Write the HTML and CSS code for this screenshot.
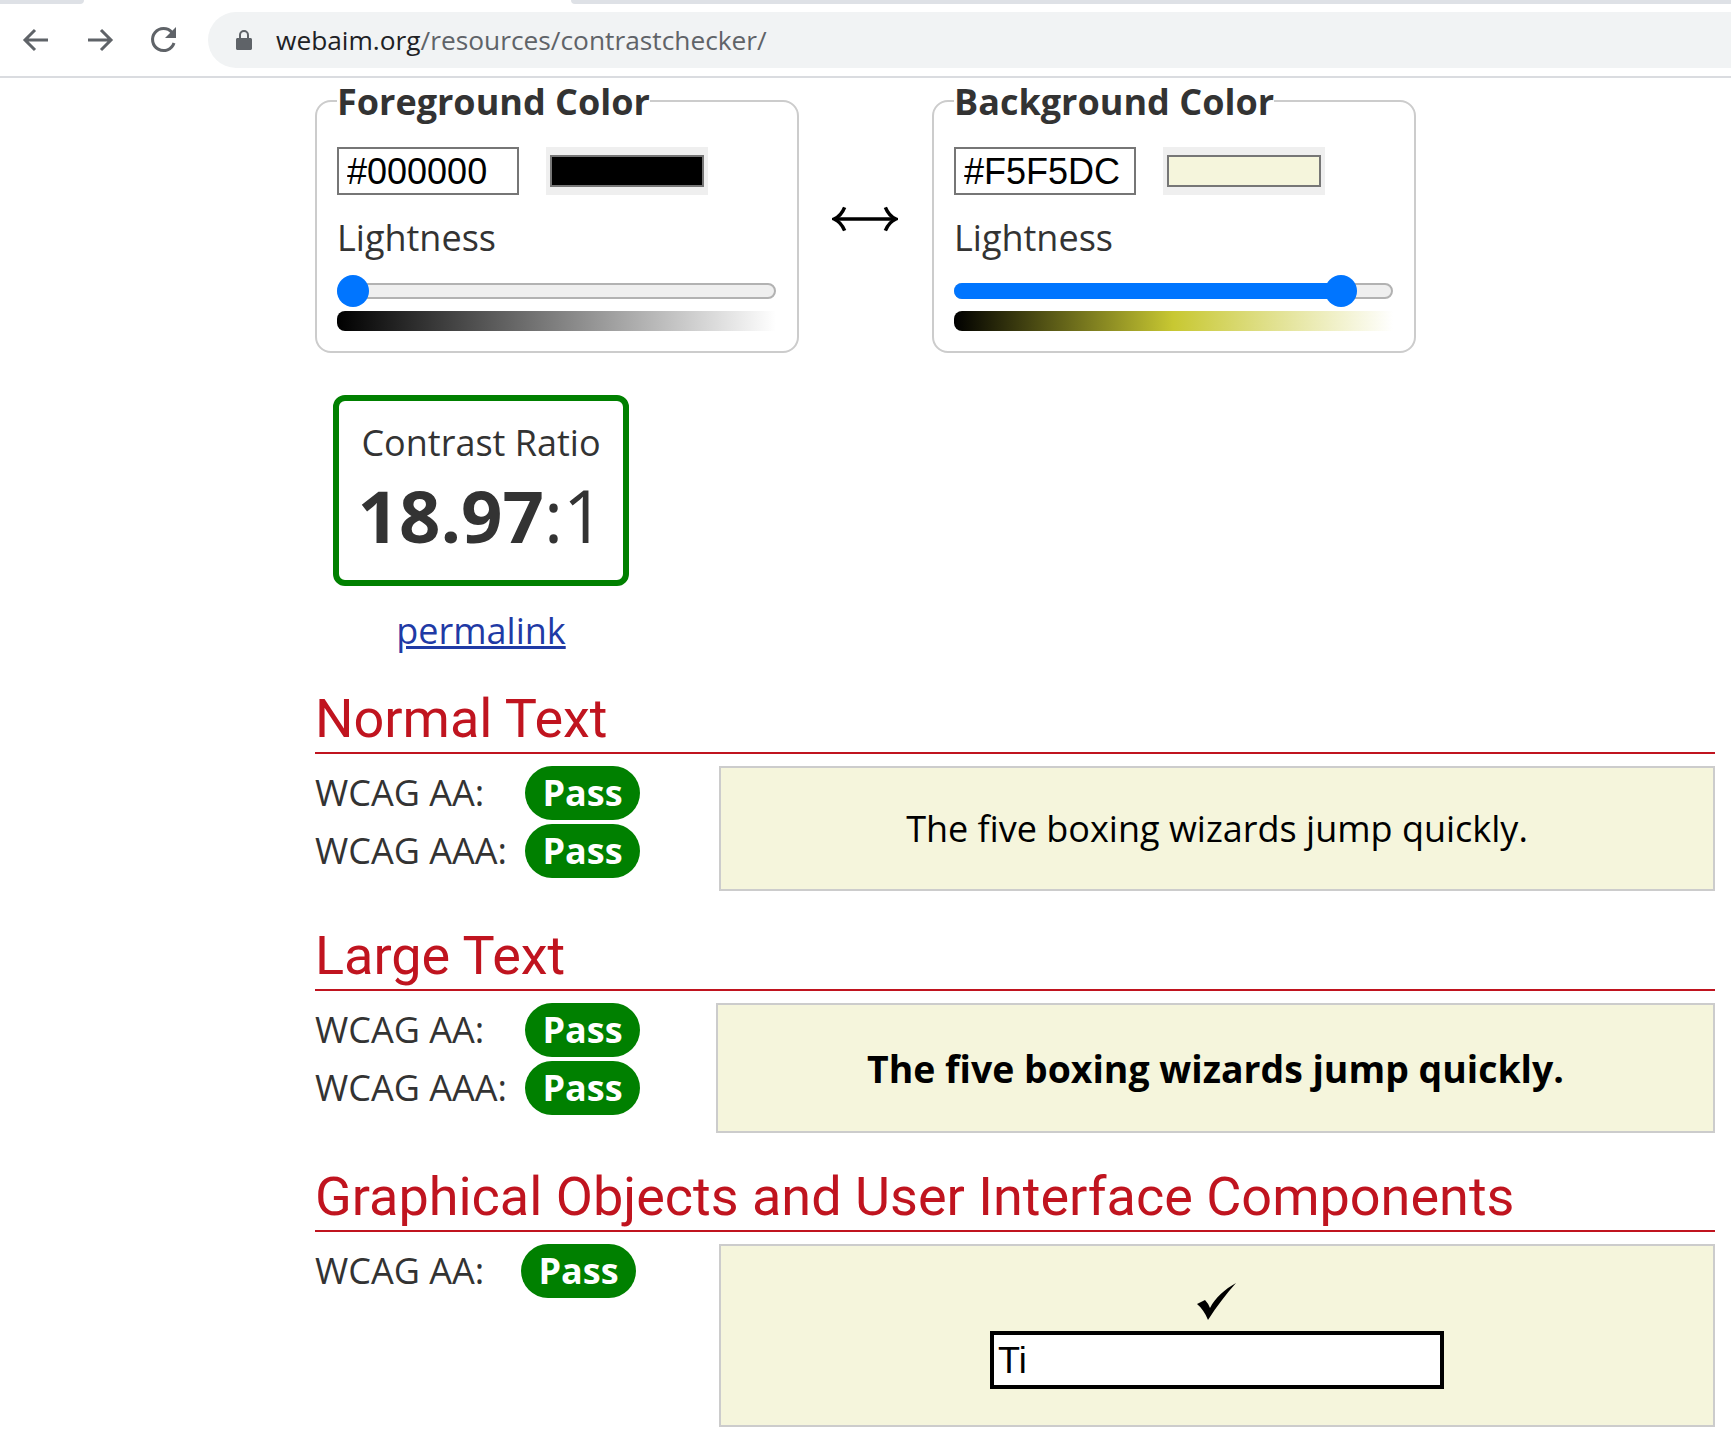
FILE: index.html
```html
<!DOCTYPE html>
<html lang="en">
<head>
<meta charset="utf-8">
<title>WebAIM: Contrast Checker</title>
<link rel="stylesheet" href="styles.css">
</head>
<body>
<header class="chrome">
  <div class="tabstrip"><span class="tab-left"></span><span class="tab-right"></span></div>
  <div class="toolbar">
    <svg class="nav" viewBox="0 0 32 32" aria-hidden="true"><path d="M28 16H6M15 6L5 16l10 10" /></svg>
    <svg class="nav" viewBox="0 0 32 32" aria-hidden="true"><path d="M4 16h22M17 6l10 10-10 10" /></svg>
    <svg class="nav" viewBox="0 0 32 32" aria-hidden="true"><path d="M26 19a11 11 0 1 1-2-10.500" /><path class="solid" d="M28 3v11H17z" /></svg>
    <div class="omnibox">
      <svg class="lock" viewBox="0 0 16 22" aria-hidden="true"><path d="M3 9V6a5 5 0 0 1 10 0v3h1.500c.8 0 1.500.7 1.500 1.500v9c0 .8-.7 1.500-1.500 1.500h-13C.7 21 0 20.300 0 19.500v-9C0 9.700.7 9 1.500 9zm2 0h6V6a3 3 0 0 0-6 0z"/></svg>
      <span class="url">webaim.org<span class="url-path">/resources/contrastchecker/</span></span>
    </div>
  </div>
</header>
<main class="page">
  <div class="pickers">
    <fieldset class="picker">
      <legend>Foreground Color</legend>
      <div class="color-row">
        <input class="hex" type="text" value="#000000" aria-label="Foreground hex">
        <span class="swatch"><span class="swatch-fill black"></span></span>
      </div>
      <div class="light-label">Lightness</div>
      <div class="slider"><span class="thumb thumb-fg"></span></div>
      <div class="ramp ramp-fg"></div>
    </fieldset>
    <div class="swap">
      <svg viewBox="0 0 68 26" aria-hidden="true"><path d="M3 13h62" /><path d="M13 1C11 6 7 11 2 13c5 2 9 7 11 12M55 1c2 5 6 10 11 12-5 2-9 7-11 12" /></svg>
    </div>
    <fieldset class="picker">
      <legend>Background Color</legend>
      <div class="color-row">
        <input class="hex" type="text" value="#F5F5DC" aria-label="Background hex">
        <span class="swatch"><span class="swatch-fill beige"></span></span>
      </div>
      <div class="light-label">Lightness</div>
      <div class="slider"><span class="slider-fill"></span><span class="thumb thumb-bg"></span></div>
      <div class="ramp ramp-bg"></div>
    </fieldset>
  </div>

  <div class="ratio">
    <div class="ratio-box">
      <div class="ratio-label">Contrast Ratio</div>
      <div class="ratio-value"><strong>18.97</strong>:1</div>
    </div>
    <a class="permalink" href="#">permalink</a>
  </div>

  <section class="result result-normal">
    <h2>Normal Text</h2>
    <div class="result-body">
      <div class="checks">
        <div class="check"><span class="check-name">WCAG AA:</span><span class="pass">Pass</span></div>
        <div class="check"><span class="check-name">WCAG AAA:</span><span class="pass">Pass</span></div>
      </div>
      <div class="sample sample-normal">The five boxing wizards jump quickly.</div>
    </div>
  </section>

  <section class="result result-large">
    <h2>Large Text</h2>
    <div class="result-body">
      <div class="checks">
        <div class="check"><span class="check-name">WCAG AA:</span><span class="pass">Pass</span></div>
        <div class="check"><span class="check-name">WCAG AAA:</span><span class="pass">Pass</span></div>
      </div>
      <div class="sample sample-large">The five boxing wizards jump quickly.</div>
    </div>
  </section>

  <section class="result result-ui">
    <h2>Graphical Objects and User Interface Components</h2>
    <div class="result-body">
      <div class="checks">
        <div class="check"><span class="check-name check-name-ui">WCAG AA:</span><span class="pass">Pass</span></div>
      </div>
      <div class="sample sample-ui">
        <svg class="tick" viewBox="0 0 40 38" aria-hidden="true"><path d="M0 21L8 17Q11 20 13 25C18 15 28 6 39 0 29 11 20 23 11 37 8 30 5 25 0 21z"/></svg>
        <div class="ui-input">Ti</div>
      </div>
    </div>
  </section>
</main>
</body>
</html>
```
FILE: styles.css
```css
* { box-sizing: border-box; }
html, body { margin: 0; padding: 0; background: #fff; }
body { width: 1731px; height: 1439px; overflow: hidden; font-family: "Open Sans", sans-serif; color: #333; }

.chrome { height: 78px; border-bottom: 2px solid #dadce0; background: #fff; }
.tabstrip { display: flex; justify-content: space-between; height: 12px; }
.tab-left, .tab-right { display: block; height: 4px; background: #dee1e6; }
.tab-left { width: 84px; border-bottom-right-radius: 6px; }
.tab-right { width: 1160px; border-bottom-left-radius: 6px; }
.toolbar { display: flex; align-items: center; height: 56px; padding-left: 20px; }
.nav { width: 32px; height: 32px; margin-right: 32px; flex: none; fill: none; stroke: #5f6368; stroke-width: 3; }
.nav .solid { fill: #5f6368; stroke: none; }
.nav:nth-child(3) { margin-right: 28px; }
.omnibox { flex: 1; height: 56px; display: flex; align-items: center; padding-left: 28px; background: #f1f3f4; border-radius: 28px 0 0 28px; }
.lock { width: 16px; height: 22px; fill: #5f6368; margin-right: 24px; }
.url { font-size: 26.3px; color: #202124; }
.url-path { color: #5f6368; }

.page { padding: 0 16px 0 315px; }
.pickers { display: flex; align-items: flex-start; }
.picker { width: 484px; height: 275px; margin: 0; padding: 0 20px; border: 2px solid #ccc; border-radius: 16px; min-width: 0; }
.picker legend { position: relative; top: 1px; padding: 0; margin: 0; font-size: 36px; font-weight: 700; line-height: 46px; color: #333; }
.color-row { display: flex; margin-top: 23px; }
.hex { width: 182px; height: 48px; padding: 1px 8px 0; border: 2px solid #767676; border-radius: 0; background: #fff; color: #000; font: 36px "Liberation Sans", sans-serif; outline: none; }
.swatch { display: block; width: 162px; height: 48px; margin-left: 27px; padding: 8px 4px; background: #efefef; }
.swatch-fill { display: block; width: 100%; height: 100%; border: 2px solid #767676; }
.black { background: #000; }
.beige { background: #f5f5dc; }
.light-label { margin-top: 19px; font-size: 36px; font-weight: 400; line-height: 48px; color: #333; }
.slider { position: relative; width: 439px; height: 16px; margin-top: 21px; border: 2px solid #b2b2b2; border-radius: 8px; background: #efefef; }
.slider-fill { position: absolute; left: -2px; top: -2px; width: 391px; height: 16px; border-radius: 8px 0 0 8px; background: #0075ff; }
.thumb { position: absolute; top: -10px; width: 32px; height: 32px; border-radius: 50%; background: #0075ff; }
.thumb-fg { left: -2px; }
.thumb-bg { left: 369px; }
.ramp { width: 439px; height: 20px; margin-top: 12px; border-radius: 8px 0 0 8px; }
.ramp-fg { background: linear-gradient(to right, #000, #fff); }
.ramp-bg { background: linear-gradient(to right, #000 0%, #c8c832 50%, #fff 100%); }
.swap { width: 133px; flex: none; display: flex; justify-content: center; padding: 128px 2px 0 0; }
.swap svg { width: 66px; height: 26px; fill: none; stroke: #000; stroke-width: 3.6; }

.ratio { width: 296px; margin: 42px 0 0 18px; text-align: center; }
.ratio-box { height: 191px; padding-top: 18px; border: 6px solid #008000; border-radius: 12px; }
.ratio-label { font-size: 36px; line-height: 48px; color: #333; }
.ratio-value { font-size: 72.5px; line-height: 80px; margin-top: 8px; font-weight: 400; color: #333; }
.ratio-value strong { font-weight: 700; }
.permalink { display: inline-block; margin-top: 21px; font-size: 36px; line-height: 48px; color: #1f3aa5; }

h2 { margin: 0; height: 65px; border-bottom: 2px solid #c0141f; font: 400 54px/60px Roboto, sans-serif; color: #c0141f; }
.result-normal { margin-top: 34px; }
.result-large { margin-top: 35px; }
.result-ui { margin-top: 34px; }
.result-body { display: flex; align-items: flex-start; margin-top: 12px; }
.checks { flex: none; }
.check { display: flex; align-items: center; height: 54px; margin-bottom: 4px; }
.check-name { width: 210px; font-size: 36px; line-height: 48px; color: #333; }
.check-name-ui { width: 206px; }
.pass { display: block; width: 115px; height: 54px; border-radius: 27px; background: #008000; color: #fff; font-size: 36px; font-weight: 700; line-height: 53px; text-align: center; }
.sample { flex: none; display: flex; align-items: center; justify-content: center; border: 2px solid #ccc; background: #f5f5dc; color: #000; }
.sample-normal { width: 996px; height: 125px; margin-left: 79px; font-size: 36px; }
.sample-large { width: 999px; height: 130px; margin-left: 76px; font-size: 37.4px; font-weight: 700; }
.sample-ui { width: 996px; height: 183px; margin-left: 83px; flex-direction: column; justify-content: flex-start; padding-top: 37px; }
.tick { width: 40px; height: 38px; fill: #000; }
.ui-input { width: 454px; height: 58px; margin-top: 10px; padding: 0 4px; border: 4px solid #000; background: #fff; font: 36px/52px "Liberation Sans", sans-serif; color: #000; }
```
